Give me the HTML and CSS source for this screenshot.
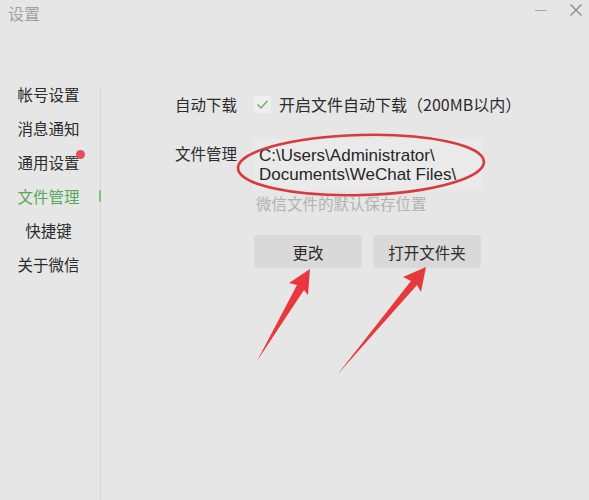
FILE: index.html
```html
<!DOCTYPE html>
<html lang="zh-CN">
<head>
<meta charset="utf-8">
<title>设置</title>
<link rel="stylesheet" href="styles.css">
</head>
<body>
<div class="window">
  <div class="titlebar">
    <span class="title">设置</span>
    <div class="controls">
      <span class="min"></span>
      <svg class="close" width="14" height="14" viewBox="0 0 14 14"><path d="M1.5 1.5 L12.5 12.5 M12.5 1.5 L1.5 12.5" stroke="#8a8a8a" stroke-width="1.3" fill="none"/></svg>
    </div>
  </div>
  <div class="main">
    <nav class="nav">
      <div class="nav-item">帐号设置</div>
      <div class="nav-item">消息通知</div>
      <div class="nav-item dot">通用设置</div>
      <div class="nav-item active">文件管理</div>
      <div class="nav-item">快捷键</div>
      <div class="nav-item">关于微信</div>
    </nav>
    <div class="divider"></div>
    <section class="content">
      <div class="row row-download">
        <div class="label">自动下载</div>
        <div class="check-line">
          <span class="checkbox"><svg width="13" height="11" viewBox="0 0 13 11"><path d="M1.5 5.5 L5 9 L11.5 1.8" stroke="#6fb56f" stroke-width="1.5" fill="none"/></svg></span>
          <span class="check-text">开启文件自动下载（200MB以内）</span>
        </div>
      </div>
      <div class="row row-path">
        <div class="label label-path">文件管理</div>
        <div class="path-col">
          <div class="path-box">
            <div class="path-line">C:\Users\Administrator\</div>
            <div class="path-line">Documents\WeChat Files\</div>
          </div>
          <div class="hint">微信文件的默认保存位置</div>
          <div class="buttons">
            <button class="btn">更改</button>
            <button class="btn">打开文件夹</button>
          </div>
        </div>
      </div>
    </section>
  </div>
  <svg class="annot" width="589" height="500" viewBox="0 0 589 500">
    <ellipse cx="361" cy="165" rx="123" ry="30" transform="rotate(-1.5 361 165)" fill="none" stroke="#d83a40" stroke-width="2.6"/>
    <polygon points="310,269 289,283 297,285 257,361 304,290 308,295" fill="#e8383d"/>
    <polygon points="426,267 403,277 411,281 337,375 417,285 421,292" fill="#e8383d"/>
  </svg>
</div>
</body>
</html>
```

FILE: styles.css
```css
* { box-sizing: border-box; }
html, body { margin: 0; padding: 0; }
body {
  background: #e6e6e6;
  font-family: "Noto Sans CJK SC", "Noto Sans", sans-serif;
  color: #2c2c2c;
  width: 589px;
  height: 500px;
  overflow: hidden;
}
.window { position: relative; width: 589px; height: 500px; display: flex; flex-direction: column; }
.titlebar {
  height: 30px;
  display: flex;
  align-items: center;
  justify-content: space-between;
  padding: 0 6px 0 8px;
  flex: none;
}
.title { font-size: 16px; color: #a0a0a0; line-height: 30px; margin-top: -4px; }
.controls { display: flex; align-items: center; gap: 22px; margin-top: -10px; }
.min { display: block; width: 12px; height: 1px; background: #a8a8a8; }
.close { display: block; }
.main { flex: 1; display: flex; }
.nav {
  width: 97px;
  margin-right: 3px;
  padding-top: 47px;
  display: flex;
  flex-direction: column;
}
.nav-item {
  height: 34px;
  line-height: 34px;
  font-size: 15.5px;
  text-align: center;
  color: #2c2c2c;
  position: relative;
}
.nav-item.active { color: #56a85a; }
.nav-item.active::after {
  content: "";
  position: absolute;
  left: 99px;
  top: 11px;
  width: 2px;
  height: 12px;
  background: #7cc47c;
}
.nav-item.dot::after {
  content: "";
  position: absolute;
  left: 76px;
  top: 5px;
  width: 9px;
  height: 9px;
  border-radius: 50%;
  background: #e0505a;
}
.divider { width: 1px; margin-top: 56px; background: #d6d6d6; flex: none; }
.content { flex: 1; padding: 62px 0 0 74px; }
.row { display: flex; }
.label { width: 78px; font-size: 15.5px; flex: none; }
.row-download { align-items: center; height: 24px; }
.check-line { display: flex; align-items: center; }
.checkbox {
  width: 17px; height: 17px;
  background: #eeeeee;
  display: flex; align-items: center; justify-content: center;
  margin-left: 1px;
  margin-right: 8px;
}
.check-text { font-size: 16px; }
.row-path { margin-top: 23px; }
.label-path { padding-top: 3px; line-height: 22px; }
.path-col { display: flex; flex-direction: column; }
.path-box {
  width: 229px;
  height: 51px;
  background: #eaeaea;
  font-family: "Liberation Sans", Arial, sans-serif;
  font-size: 17px;
  padding: 7px 0 0 6px;
  color: #262626;
}
.path-line { height: 19px; line-height: 19px; white-space: nowrap; }
.hint { font-size: 15.5px; color: #b2b2b2; margin: 2px 0 0 3px; line-height: 22px; }
.buttons { display: flex; gap: 11px; margin-top: 21px; margin-left: 1px; }
.btn {
  width: 108px;
  height: 33px;
  border: none;
  border-radius: 4px;
  background: #d9d9d9;
  font-family: "Noto Sans CJK SC", sans-serif;
  font-size: 15.5px;
  color: #2c2c2c;
  padding: 0;
}
.annot { position: absolute; left: 0; top: 0; pointer-events: none; }
```
